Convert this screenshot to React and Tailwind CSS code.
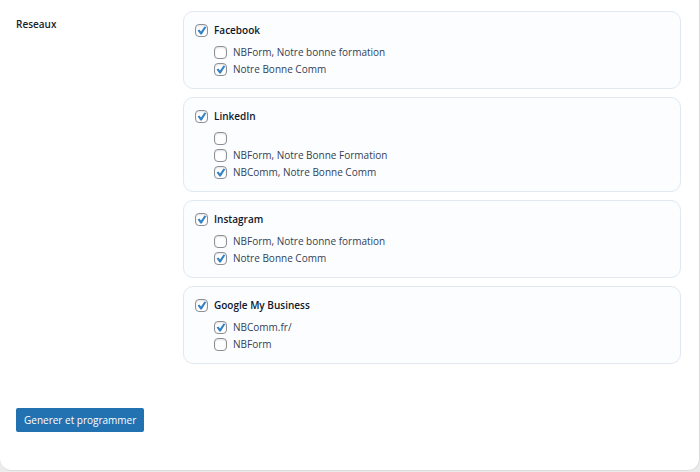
const networks = [
  {
    id: "facebook",
    name: "Facebook",
    accounts: [
      { label: "NBForm, Notre bonne formation", checked: false },
      { label: "Notre Bonne Comm", checked: true },
    ],
  },
  {
    id: "linkedin",
    name: "LinkedIn",
    accounts: [
      { label: "", checked: false },
      { label: "NBForm, Notre Bonne Formation", checked: false },
      { label: "NBComm, Notre Bonne Comm", checked: true },
    ],
  },
  {
    id: "instagram",
    name: "Instagram",
    accounts: [
      { label: "NBForm, Notre bonne formation", checked: false },
      { label: "Notre Bonne Comm", checked: true },
    ],
  },
  {
    id: "google",
    name: "Google My Business",
    accounts: [
      { label: "NBComm.fr/", checked: true },
      { label: "NBForm", checked: false },
    ],
  },
];

function Checkbox({ id, defaultChecked }) {
  return (
    <span className="grid size-[13px] shrink-0">
      <input
        id={id}
        type="checkbox"
        defaultChecked={defaultChecked}
        className="peer col-start-1 row-start-1 size-[13px] appearance-none rounded-[4px] border border-[#8c8f94] bg-white shadow-[inset_0_1px_2px_rgba(0,0,0,0.12)]"
      />
      <svg
        viewBox="0 0 13 13"
        aria-hidden="true"
        className="pointer-events-none invisible col-start-1 row-start-1 size-[13px] peer-checked:visible"
      >
        <path d="M2.6 6.4 L4.4 5.4 L6 7.6 L9.5 2.4 L11.3 3.2 L6.8 10.4 L5.4 10.4 Z" fill="#3582c4" />
      </svg>
    </span>
  );
}

function NetworkCard({ network }) {
  return (
    <div className="rounded-[10px] border border-[#e2e8f0] bg-[#fbfdff] px-[11px] py-[10px]">
      <label htmlFor={network.id} className="flex h-4 items-center gap-1.5 font-semibold text-[#0f172a]">
        <Checkbox id={network.id} defaultChecked />
        {network.name}
      </label>
      <div className="mt-1.5 ml-[19px]">
        {network.accounts.map((account, index) => (
          <label
            key={index}
            htmlFor={`${network.id}-${index}`}
            className="flex h-[17px] items-center gap-1.5 pb-px text-[#334155]"
          >
            <Checkbox id={`${network.id}-${index}`} defaultChecked={account.checked} />
            {account.label}
          </label>
        ))}
      </div>
    </div>
  );
}

export default function App() {
  return (
    <div className="min-h-screen bg-[#ececec] pb-px font-['Segoe_UI','Open_Sans',sans-serif] text-[10px] leading-4">
      <form
        className="rounded-b-[12px] border-r border-b border-[#dcdcdc] bg-white px-4 pt-[11px] pb-[38px]"
        onSubmit={(event) => event.preventDefault()}
      >
        <div className="flex">
          <div className="w-[167px] shrink-0 pt-[5px] font-semibold text-[#1d2327]">Reseaux</div>
          <div className="mr-0.5 flex grow flex-col gap-2">
            {networks.map((network) => (
              <NetworkCard key={network.id} network={network} />
            ))}
          </div>
        </div>
        <button
          type="submit"
          className="mt-11 block h-6 rounded-[2px] bg-[#2271b1] px-2 text-white"
        >
          Generer et programmer
        </button>
      </form>
    </div>
  );
}
